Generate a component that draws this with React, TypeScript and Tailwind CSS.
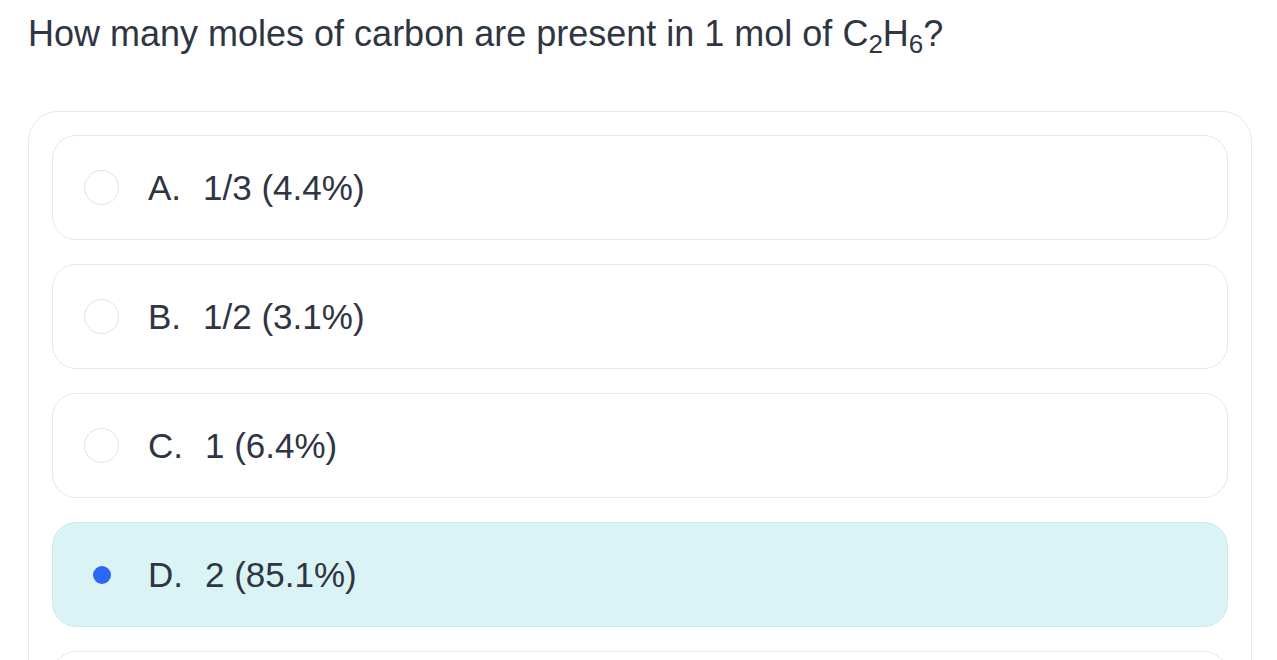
import React from "react";

const options = [
  { letter: "A.", text: "1/3 (4.4%)", selected: false },
  { letter: "B.", text: "1/2 (3.1%)", selected: false },
  { letter: "C.", text: "1 (6.4%)", selected: false },
  { letter: "D.", text: "2 (85.1%)", selected: true },
  { letter: "", text: "", selected: false },
];

export default function App() {
  return (
    <div
      className="min-h-screen bg-white text-[#2f3542]"
      style={{ fontFamily: '"Liberation Sans", Arial, sans-serif' }}
    >
      <h1 className="pl-[28px] pt-[14px] text-[36px] leading-[40px] font-normal">
        How many moles of carbon are present in 1 mol of C
        <sub className="text-[26px]">2</sub>H<sub className="text-[26px]">6</sub>?
      </h1>
      <div className="ml-[28px] mt-[57px] w-[1224px] rounded-[30px] border border-[#e6e8ec] p-[23px] flex flex-col gap-6">
        {options.map((o, i) => (
          <div
            key={i}
            className={
              "h-[105px] rounded-[24px] border flex items-center pl-[31px] " +
              (o.selected
                ? "bg-[#daf4f5] border-[#c6ecee]"
                : "bg-white border-[#e6e8ec]")
            }
          >
            {o.selected ? (
              <div className="w-[35px] h-[35px] rounded-full border border-[#e3eef2] flex items-center justify-center">
                <div className="w-[18px] h-[18px] rounded-full bg-[#2c67f6]" />
              </div>
            ) : (
              <div className="w-[35px] h-[35px] rounded-full border-[1.5px] border-[#dfe2e7] bg-white" />
            )}
            {o.letter && (
              <div className="ml-[29px] text-[35px] leading-[40px] flex">
                <span>{o.letter}</span>
                <span className="ml-[22px]">{o.text}</span>
              </div>
            )}
          </div>
        ))}
      </div>
    </div>
  );
}
